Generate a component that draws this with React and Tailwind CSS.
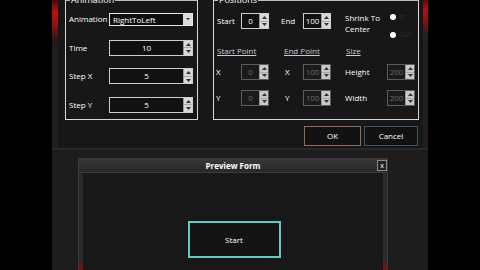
import React from 'react'

const font = { fontFamily: '"Open Sans", "Noto Sans", sans-serif' }

function Spin({ light = 'bg-[#d6d6d6]' }) {
  return (
    <div className={`w-[9px] flex flex-col ${light} border-l border-[#9a9a9a]`}>
      <div className="flex-1 flex items-center justify-center border-b border-[#a8a8a8]">
        <svg width="5" height="3" viewBox="0 0 5 3"><path d="M0 3 L2.5 0 L5 3 Z" fill="#333" /></svg>
      </div>
      <div className="flex-1 flex items-center justify-center">
        <svg width="5" height="3" viewBox="0 0 5 3"><path d="M0 0 L2.5 3 L5 0 Z" fill="#333" /></svg>
      </div>
    </div>
  )
}

function Num({ value, wide, disabled }) {
  return (
    <div
      className={`flex h-[16px] ${wide ? 'w-[84px]' : 'w-[28px]'} border ${
        disabled ? 'border-[#5c5c5c] bg-[#1a1a1a]' : 'border-[#cfcfcf] bg-[#111111]'
      }`}
    >
      <div
        className={`flex-1 flex items-center justify-center text-[8px] ${
          disabled ? 'text-[#6a6a6a]' : 'text-white'
        }`}
      >
        {value}
      </div>
      <Spin light={disabled ? 'bg-[#c8c8c8]' : 'bg-[#d8d8d8]'} />
    </div>
  )
}

function Row({ label, children }) {
  return (
    <div className="h-[29px] flex items-center">
      <span className="w-[40px] text-[8px] text-white">{label}</span>
      {children}
    </div>
  )
}

function Radio() {
  return <div className="w-[6px] h-[6px] rounded-full bg-white" />
}

export default function App() {
  return (
    <div className="w-[480px] h-[270px] bg-black flex overflow-hidden" style={font}>
      <div className="w-[52px]" />
      <div className="w-[376px] flex flex-col bg-[#1d1d1d]">
        {/* top dialog */}
        <div className="h-[150px] flex border-b-2 border-[#282828]">
          <div className="w-[6px] bg-[linear-gradient(to_bottom,#4a0808_0px,#b81414_12px,#9a1010_24px,#2a1616_40px,#1f1f1f_52px,#1f1f1f)]" />
          <div className="flex-1 bg-[#171717] flex flex-col">
            <div className="flex h-[120px]">
              {/* Animation group */}
              <div className="ml-[7px] w-[133px] h-[120px] border border-[#d8d8d8] border-t-[#bdbdbd] relative pl-[3px] pt-[4px] flex flex-col">
                <span className="absolute left-[4px] top-[-6px] bg-[#171717] px-[1px] text-[9px] text-white leading-none">
                  Animation
                </span>
                <Row label="Animation">
                  <div className="flex w-[84px] h-[13px] border border-[#e6e6e6] bg-[#0e0e0e]">
                    <span className="flex-1 pl-[3px] text-[8px] leading-[11px] text-white">RightToLeft</span>
                    <div className="w-[9px] bg-[#dcdcdc] flex items-center justify-center">
                      <svg width="4" height="2" viewBox="0 0 4 2"><path d="M0 0 L2 2 L4 0 Z" fill="#333" /></svg>
                    </div>
                  </div>
                </Row>
                <Row label="Time"><Num value="10" wide /></Row>
                <Row label="Step X"><Num value="5" wide /></Row>
                <Row label="Step Y"><Num value="5" wide /></Row>
              </div>

              {/* Positions group */}
              <div className="ml-[15px] w-[206px] h-[120px] border border-[#d8d8d8] border-t-[#bdbdbd] relative pl-[3px] flex flex-col">
                <span className="absolute left-[4px] top-[-6px] bg-[#171717] px-[1px] text-[9px] text-white leading-none">
                  Positions
                </span>
                <div className="mt-[10px] h-[23px] flex items-start text-[8px] text-white">
                  <div className="w-[24px] h-[16px] mt-[2px] flex items-center">Start</div>
                  <div className="mt-[2px]"><Num value="0" /></div>
                  <div className="w-[34px] h-[16px] mt-[2px] pl-[12px] flex items-center">End</div>
                  <div className="mt-[2px]"><Num value="100" /></div>
                  <div className="w-[56px] pl-[14px] leading-[11px] mt-[1px]">
                    <div>Shrink To</div>
                    <div>Center</div>
                  </div>
                  <div className="pl-[3px] pt-[1px] flex flex-col gap-[7px]">
                    <div className="flex items-center gap-[3px]"><Radio /><span className="text-[7px] text-[#2c2c2c]">In</span></div>
                    <div className="flex items-center gap-[3px]"><Radio /><span className="text-[7px] text-[#2c2c2c]">Out</span></div>
                  </div>
                </div>
                <div className="mt-[11px] h-[12px] flex items-center text-[8px] text-[#c6ccd8] underline">
                  <span className="w-[67px]">Start Point</span>
                  <span className="w-[62px]">End Point</span>
                  <span>Size</span>
                </div>
                <div className="mt-[7px] h-[16px] flex items-center text-[8px] text-white">
                  <span className="w-[24px] -ml-[1px] mr-[1px]">X</span>
                  <Num value="0" disabled />
                  <span className="w-[34px] pl-[16px]">X</span>
                  <Num value="100" disabled />
                  <span className="w-[56px] pl-[14px]">Height</span>
                  <Num value="200" disabled />
                </div>
                <div className="mt-[10px] h-[16px] flex items-center text-[8px] text-white">
                  <span className="w-[24px] -ml-[1px] mr-[1px]">Y</span>
                  <Num value="0" disabled />
                  <span className="w-[34px] pl-[16px]">Y</span>
                  <Num value="100" disabled />
                  <span className="w-[56px] pl-[14px]">Width</span>
                  <Num value="200" disabled />
                </div>
              </div>
            </div>

            <div className="mt-[6px] flex justify-end gap-[3px] pr-[5px]">
              <button className="w-[57px] h-[20px] border border-[#8a6c58] bg-[#121212] text-[8px] text-white">OK</button>
              <button className="w-[54px] h-[20px] border border-[#3c5566] bg-[#121212] text-[8px] text-white">Cancel</button>
            </div>
          </div>
          <div className="w-[5px] bg-[linear-gradient(to_bottom,#5a0a0a_0px,#b01414_10px,#801010_22px,#262020_34px,#1f1f1f_44px,#1f1f1f)]" />
        </div>

        {/* preview form */}
        <div className="flex-1 pt-[8px] pl-[26px] flex">
          <div className="w-[310px] flex flex-col">
            <div className="h-[15px] border border-[#3c3c3c] bg-[linear-gradient(to_bottom,#383838,#282828)] flex items-center relative">
              <span className="flex-1 text-center text-[8px] font-bold text-white">Preview Form</span>
              <div className="absolute right-[0px] top-[1px] w-[10px] h-[11px] border border-[#8a8a8a] bg-[#232323] flex items-center justify-center text-[7px] leading-none text-white">
                x
              </div>
            </div>
            <div className="flex-1 flex">
              <div className="w-[5px] border-l border-[#3a3a3a] bg-[linear-gradient(to_bottom,#2a2a2a_0px,#2a2a2a_86px,#7a1212_96px)]" />
              <div className="flex-1 bg-[#181818] flex justify-center pt-[48px] pl-[2px]">
                <button className="w-[93px] h-[37px] border-2 border-[#5fcbc3] bg-[#141414] text-[8px] text-white">
                  Start
                </button>
              </div>
              <div className="w-[5px] border-r border-[#3a3a3a] bg-[linear-gradient(to_bottom,#2a2a2a_0px,#2a2a2a_86px,#7a1212_96px)]" />
            </div>
          </div>
        </div>
      </div>
      <div className="w-[52px]" />
    </div>
  )
}
